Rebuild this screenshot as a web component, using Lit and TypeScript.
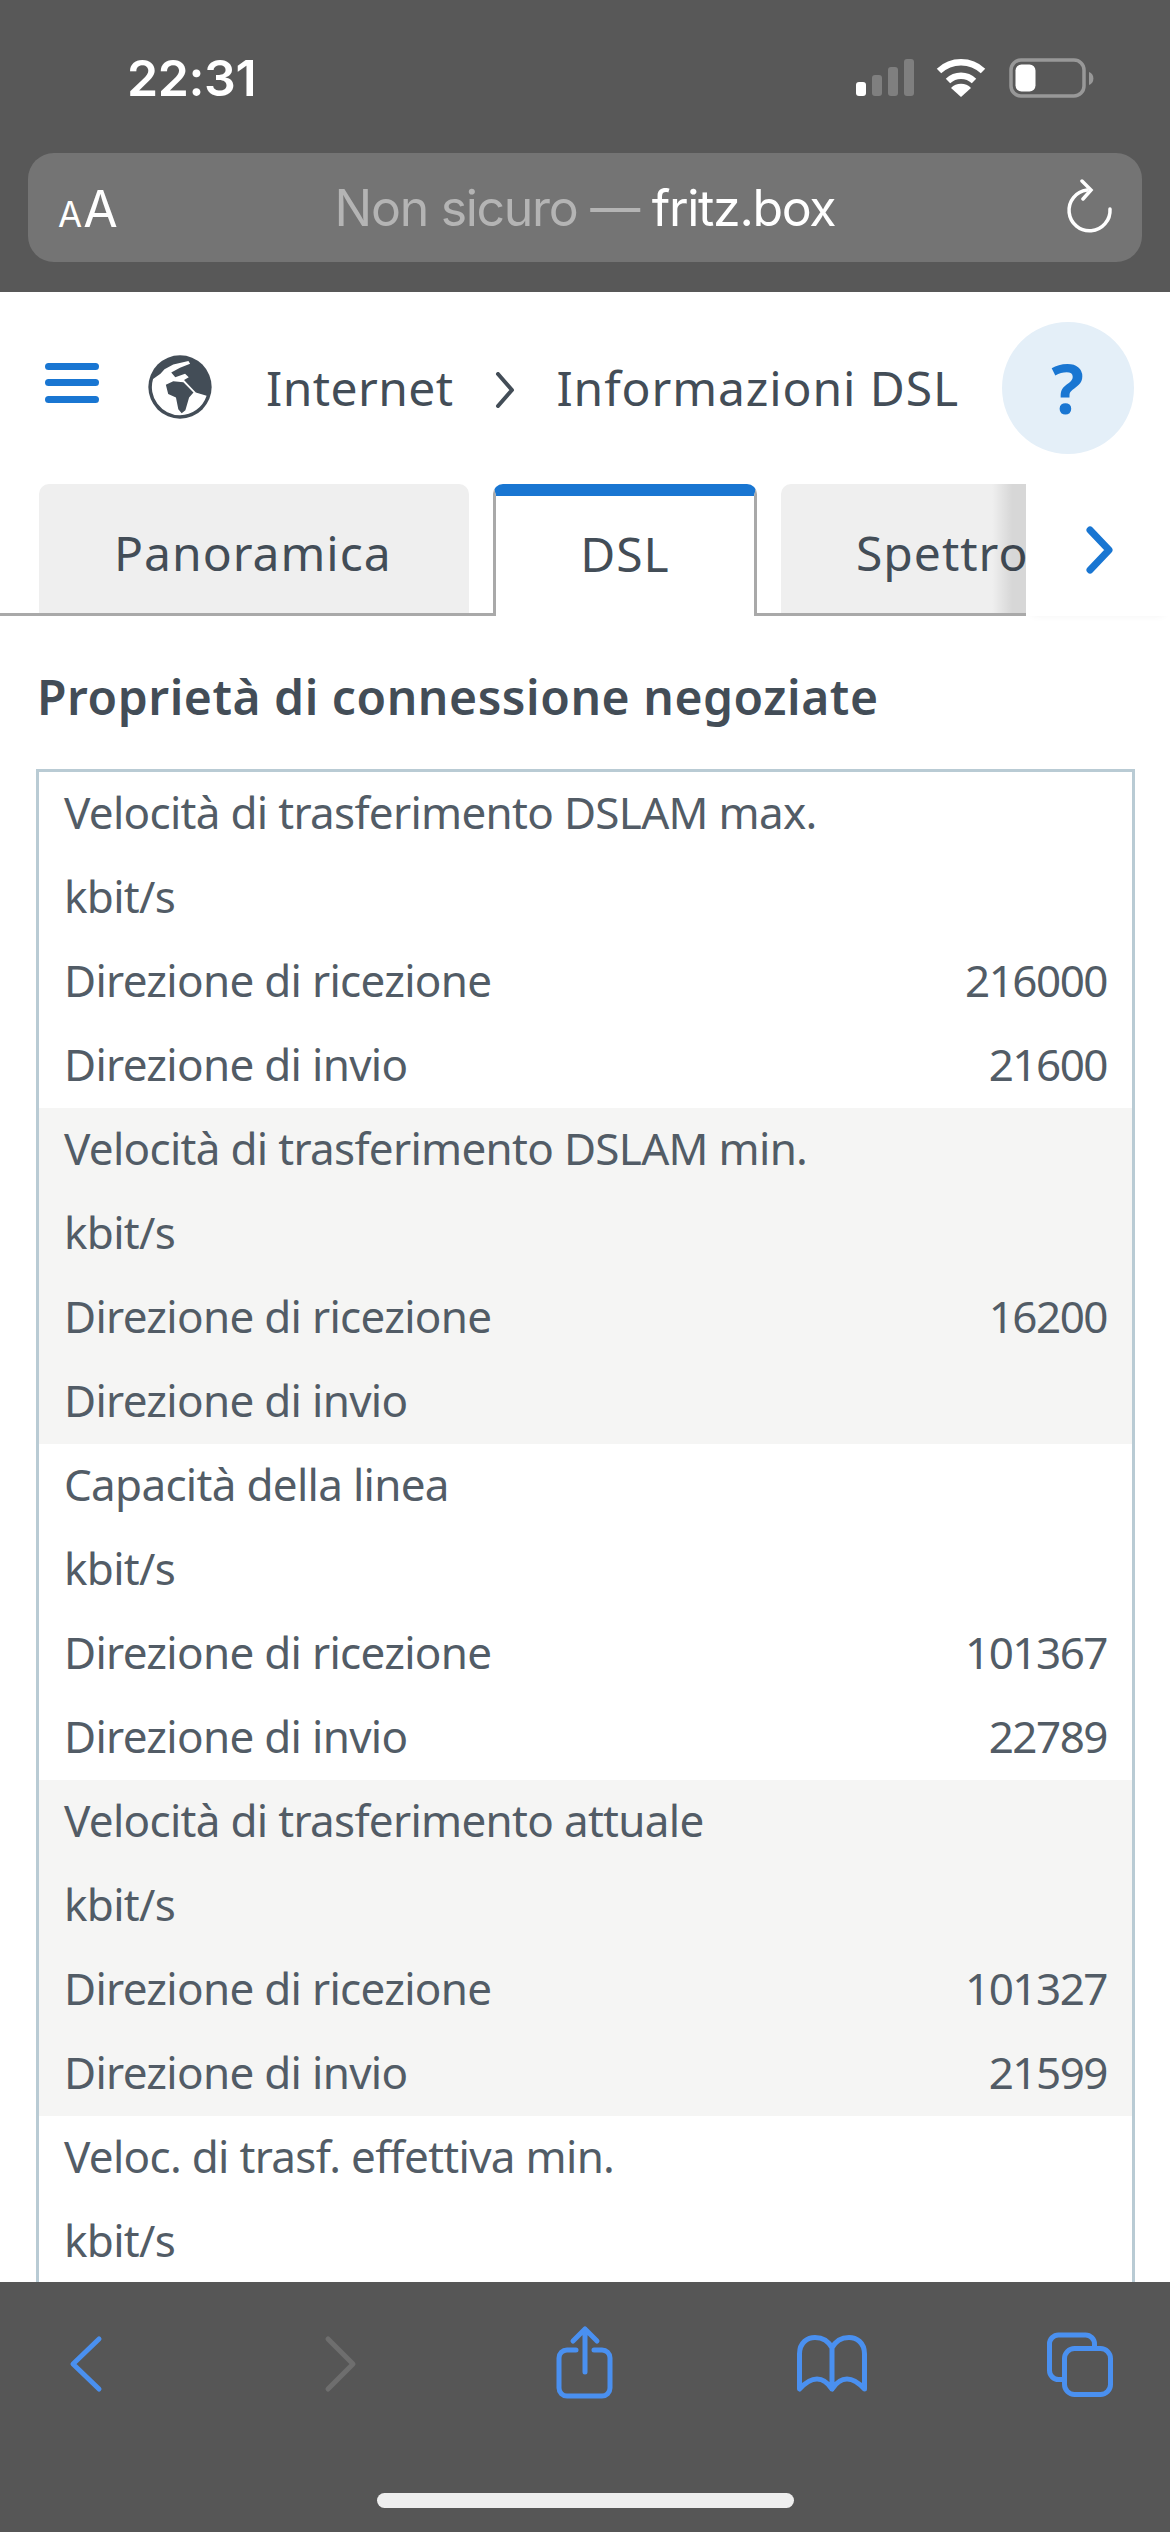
import { LitElement, html, css } from "lit";
import { customElement } from "lit/decorators.js";

type Group = { title: string; rx?: string; tx?: string; hideRows?: boolean };

const groups: Group[] = [
  { title: "Velocità di trasferimento DSLAM max.", rx: "216000", tx: "21600" },
  { title: "Velocità di trasferimento DSLAM min.", rx: "16200", tx: "" },
  { title: "Capacità della linea", rx: "101367", tx: "22789" },
  { title: "Velocità di trasferimento attuale", rx: "101327", tx: "21599" },
  { title: "Veloc. di trasf. effettiva min.", hideRows: true },
];

@customElement("app-root")
export class AppRoot extends LitElement {
  static styles = css`
    :host { display: block; width: 1170px; height: 2532px; overflow: hidden; background: #fff; font-family: "Noto Sans", "Open Sans", sans-serif; color: #525c66; }
    .page { display: flex; flex-direction: column; height: 2532px; }
    .top { flex: 0 0 292px; background: #585858; box-sizing: border-box; padding: 0 28px; display: flex; flex-direction: column; }
    .status { height: 153px; display: flex; align-items: flex-start; justify-content: space-between; box-sizing: border-box; padding: 50px 46px 0 99px; }
    .time { font: 600 50px/56px "Inter", "Liberation Sans", sans-serif; color: #fff; letter-spacing: -0.4px; }
    .sysicons { display: block; margin-top: 8px; }
    .url { height: 109px; background: #747474; border-radius: 26px; display: flex; align-items: center; position: relative; justify-content: center; font: 400 50px/56px "Inter", "Liberation Sans", sans-serif; letter-spacing: -1.3px; }
    .aa { position: absolute; left: 30px; top: 28px; color: #fff; font-size: 50px; letter-spacing: 0; }
    .aa small { font-size: 35px; margin-right: 1px; }
    .dim { color: #b4b4b4; }
    .host { color: #fff; }
    .reload { position: absolute; right: 28px; top: 26px; }
    .main { flex: 1; min-height: 0; overflow: hidden; display: flex; flex-direction: column; }
    .crumbs { height: 192px; flex: none; display: flex; align-items: flex-start; box-sizing: border-box; padding: 30px 36px 0 45px; font-size: 48px; letter-spacing: 0.4px; color: #434d57; }
    .crumbs .burger { margin-top: 41px; display: block; }
    .crumbs .globe { margin: 33px 0 0 49px; display: block; }
    .crumbs .t1 { margin: 34px 0 0 54px; line-height: 64px; }
    .crumbs .sep { margin: 50px 0 0 42px; display: block; }
    .crumbs .t2 { margin: 34px 0 0 41px; line-height: 64px; letter-spacing: 0.9px; }
    .help { margin-left: auto; width: 132px; height: 132px; border-radius: 50%; background: #e4eff8; color: #1976d2; display: flex; align-items: center; justify-content: center; font: 700 68px/1 "Open Sans", sans-serif; }
    .tabbar { height: 132px; flex: none; display: flex; position: relative; }
    .tabs { width: 1026px; height: 132px; box-sizing: border-box; overflow: hidden; display: flex; gap: 24px; padding-left: 39px; position: relative; font-size: 48px; letter-spacing: 1px; color: #434d57; background: linear-gradient(#a9a9a9, #a9a9a9) left bottom / 100% 3px no-repeat; }
    .tab { flex: none; box-sizing: border-box; height: 129px; background: #efefef; border-radius: 10px 10px 0 0; display: flex; align-items: center; padding: 8px 0 0 75px; white-space: nowrap; }
    .tab.p { width: 430px; }
    .tab.s { width: 430px; }
    .tab.a { width: 264px; height: 132px; background: #fff; border: 3px solid #a9a9a9; border-top: 12px solid #1976d2; border-bottom: 0; padding: 0 0 6px; justify-content: center; position: relative; z-index: 1; }
    .fade { position: absolute; right: 0; top: 0; width: 34px; height: 129px; z-index: 2; background: linear-gradient(to right, rgba(0,0,0,0), rgba(0,0,0,.1) 60%, rgba(0,0,0,.1)); }
    .next { flex: 1; display: flex; align-items: flex-start; padding: 42px 0 0 60px; box-shadow: 0 5px 8px -6px rgba(0,0,0,.06); }
    .heading { font-size: 48px; font-weight: 600; line-height: 64px; margin: 49px 0 40px 37px; color: #434d57; letter-spacing: 0.55px; }
    .table { margin: 0 35px 0 36px; border: 3px solid #b9cbd4; border-bottom: 0; flex: none; }
    .group:nth-child(even) { background: #f5f5f4; }
    .row { height: 84px; box-sizing: border-box; display: flex; align-items: center; justify-content: space-between; padding: 0 25px 5px; font-size: 44px; letter-spacing: -0.7px; }
    .val { letter-spacing: -1.5px; }
    .bottom { flex: 0 0 250px; background: #565656; position: relative; }
    .icons { display: block; }
    .homebar { position: absolute; left: 377px; top: 211px; width: 417px; height: 15px; border-radius: 8px; background: #eee; }
  `;

  private sysIcons() {
    return html`<svg class="sysicons" width="240" height="40" viewBox="0 0 240 40">
      <rect x="0" y="24" width="10" height="14" rx="3" fill="#fff"/>
      <rect x="16" y="17" width="10" height="21" rx="3" fill="#7f7f7f"/>
      <rect x="32" y="9" width="10" height="29" rx="3" fill="#7f7f7f"/>
      <rect x="48" y="1" width="10" height="37" rx="3" fill="#7f7f7f"/>
      <g fill="none" stroke="#fff" stroke-width="6.5">
        <path d="M83 13 A32 32 0 0 1 127 13"/>
        <path d="M92 23 A19 19 0 0 1 118 23"/>
      </g>
      <path d="M105 39 L95 30 A14 14 0 0 1 115 30 Z" fill="#fff"/>
      <rect x="155" y="2" width="73" height="36" rx="10" fill="none" stroke="#989898" stroke-width="3.500"/>
      <rect x="159.500" y="6.500" width="20" height="27" rx="6" fill="#fff"/>
      <path d="M233 14 A7 7 0 0 1 233 27 Z" fill="#989898"/>
    </svg>`;
  }

  private globe() {
    return html`<svg class="globe" width="64" height="64" viewBox="55 44 190 190">
      <circle cx="150" cy="139" r="94" fill="#434d57"/>
      <path fill="#fff" d="M70 115 L92 100 L104 86 L130 72 L175 62 L180 70 L150 82 L124 96 L136 110 L165 100 L176 110 L162 118 L175 132 L197 155 L229 165 A84 84 0 0 1 150 223 A84 84 0 0 1 70 115 Z"/>
      <path fill="#434d57" d="M108 132 L130 122 L160 125 L190 155 L177 170 L166 208 L155 217 L145 205 L138 170 L115 160 Z"/>
    </svg>`;
  }

  render() {
    return html`<div class="page">
      <div class="top">
        <div class="status"><span class="time">22:31</span>${this.sysIcons()}</div>
        <div class="url">
          <span class="aa"><small>A</small>A</span>
          <span><span class="dim">Non sicuro — </span><span class="host">fritz.box</span></span>
          <svg class="reload" width="48" height="56" viewBox="0 0 48 56" fill="none" stroke="#fff" stroke-width="3.500" stroke-linecap="round">
            <path d="M21 11 A20.500 20.500 0 1 0 44 30"/>
            <path d="M16 2 L25 11 L17 20"/>
          </svg>
        </div>
      </div>
      <div class="main">
        <div class="crumbs">
          <svg class="burger" width="54" height="46" viewBox="0 0 54 46" fill="#1976d2">
            <rect x="0" y="0" width="54" height="7" rx="3.500"/><rect x="0" y="16" width="54" height="7" rx="3.500"/><rect x="0" y="33" width="54" height="7" rx="3.500"/>
          </svg>
          ${this.globe()}
          <span class="t1">Internet</span>
          <svg class="sep" width="20" height="36" viewBox="0 0 20 36" fill="none" stroke="#434d57" stroke-width="4" stroke-linecap="round" stroke-linejoin="round"><path d="M3 2 L17 18 L3 34"/></svg>
          <span class="t2">Informazioni DSL</span>
          <div class="help">?</div>
        </div>
        <div class="tabbar">
          <div class="tabs">
            <div class="tab p">Panoramica</div>
            <div class="tab a">DSL</div>
            <div class="tab s">Spettro</div>
            <div class="fade"></div>
          </div>
          <div class="next">
            <svg width="28" height="48" viewBox="0 0 28 48" fill="none" stroke="#1976d2" stroke-width="7" stroke-linecap="round" stroke-linejoin="round"><path d="M4 4 L23 24 L4 44"/></svg>
          </div>
        </div>
        <div class="heading">Proprietà di connessione negoziate</div>
        <div class="table">
          ${groups.map((g) => html`<div class="group">
            <div class="row"><span>${g.title}</span></div>
            <div class="row"><span>kbit/s</span></div>
            ${g.hideRows ? "" : html`
              <div class="row"><span>Direzione di ricezione</span><span class="val">${g.rx}</span></div>
              <div class="row"><span>Direzione di invio</span><span class="val">${g.tx}</span></div>`}
          </div>`)}
        </div>
      </div>
      <div class="bottom">
        <svg class="icons" width="1170" height="200" viewBox="0 0 1170 200" fill="none" stroke="#4a90f0" stroke-width="5" stroke-linecap="round" stroke-linejoin="round">
          <path d="M99 57 L73 82 L99 107"/>
          <path d="M328 57 L353 82 L328 107" stroke="#6e6e6e"/>
          <path d="M576 68 H567 a8 8 0 0 0 -8 8 V106 a8 8 0 0 0 8 8 H602 a8 8 0 0 0 8 -8 V76 a8 8 0 0 0 -8 -8 H594"/>
          <path d="M585 47 V90 M573 59 L585 47 L597 59"/>
          <path d="M799.500 107 V72 C799.500 60 808 55.500 815 55.500 C823 55.500 829 60 832 66 C835 60 841 55.500 849 55.500 C856 55.500 864.500 60 864.500 72 V107 C858 100 853 97 847 97 C841 97 836 101 832 107 C828 101 823 97 817 97 C811 97 806 100 799.500 107 Z M832 66 V107"/>
          <rect x="1064.500" y="66.500" width="46" height="46" rx="10"/>
          <path d="M1094.500 64 V62 a9 9 0 0 0 -9 -9 H1058.500 a9 9 0 0 0 -9 9 V88.500 a9 9 0 0 0 9 9 H1062"/>
        </svg>
        <div class="homebar"></div>
      </div>
    </div>`;
  }
}
